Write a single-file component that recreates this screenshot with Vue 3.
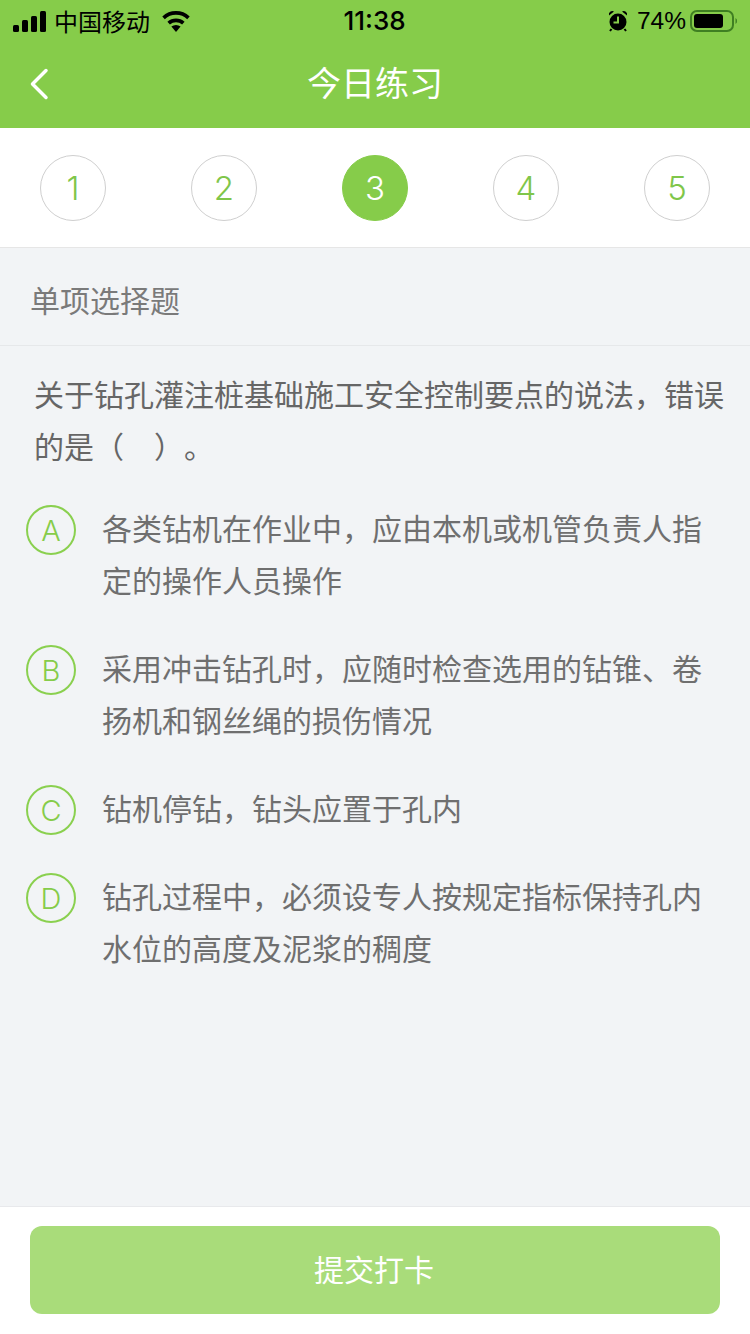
<script setup>
const steps = [1, 2, 3, 4, 5]
const current = 3
const comma = '\uFF0C'
const question = `关于钻孔灌注桩基础施工安全控制要点的说法${comma}错误的是\uFF08\u3000\uFF09\u3002`
const options = [
  { key: 'A', text: `各类钻机在作业中${comma}应由本机或机管负责人指定的操作人员操作` },
  { key: 'B', text: `采用冲击钻孔时${comma}应随时检查选用的钻锥、卷扬机和钢丝绳的损伤情况` },
  { key: 'C', text: `钻机停钻${comma}钻头应置于孔内` },
  { key: 'D', text: `钻孔过程中${comma}必须设专人按规定指标保持孔内水位的高度及泥浆的稠度` }
]
</script>

<template>
  <div class="page">
    <header class="top">
      <div class="status">
        <div class="status-left">
          <svg class="signal" width="34" height="21" viewBox="0 0 34 21">
            <rect x="0" y="14" width="6" height="7" rx="1.5" />
            <rect x="9" y="9" width="6" height="12" rx="1.5" />
            <rect x="18" y="5" width="6" height="16" rx="1.5" />
            <rect x="27" y="0" width="6" height="21" rx="1.5" />
          </svg>
          <span class="carrier">中国移动</span>
          <svg class="wifi" width="30" height="22" viewBox="0 0 30 22">
            <path d="M15 22l-4.6-5.4a7 7 0 0 1 9.2 0z" />
            <path d="M15 8.400a13 13 0 0 1 8.600 3.300l-2.500 2.900a9.300 9.300 0 0 0-12.200 0l-2.500-2.900A13 13 0 0 1 15 8.400z" />
            <path d="M15 1a20 20 0 0 1 13.700 5.400l-2.500 2.900a16.300 16.300 0 0 0-22.400 0L1.300 6.400A20 20 0 0 1 15 1z" />
          </svg>
        </div>
        <span class="time">11:38</span>
        <div class="status-right">
          <svg class="alarm" width="20" height="22" viewBox="0 0 20 22">
            <circle cx="10" cy="12" r="8.500" />
            <path d="M1 5.500a3.500 3.500 0 0 1 5-4zM19 5.500a3.500 3.500 0 0 0-5-4z" />
            <path d="M3.500 19l-1.500 2M16.500 19l1.500 2" stroke="#000" stroke-width="2" />
            <path d="M10 6.500V12.500H5.500" fill="none" stroke="#86cc4a" stroke-width="2" />
          </svg>
          <span class="percent">74%</span>
          <svg class="battery" width="48" height="22" viewBox="0 0 48 22">
            <rect x="1" y="1" width="42" height="20" rx="6" fill="none" stroke="#3f7f22" stroke-width="2" />
            <rect x="4" y="4" width="29" height="14" rx="3" fill="#000" />
            <path d="M45.500 8v6a3 3 0 0 0 1.500-3 3 3 0 0 0-1.500-3z" fill="#3f7f22" />
          </svg>
        </div>
      </div>
      <nav class="nav">
        <svg class="back" width="20" height="32" viewBox="0 0 20 32">
          <path d="M17 2.500 3.500 16 17 29.500" fill="none" stroke="#fff" stroke-width="3.500" stroke-linecap="round" stroke-linejoin="round" />
        </svg>
        <h1 class="title">今日练习</h1>
      </nav>
    </header>

    <div class="steps">
      <div v-for="n in steps" :key="n" class="step" :class="{ active: n === current }">{{ n }}</div>
    </div>

    <main class="main">
      <div class="kind">单项选择题</div>
      <p class="question">{{ question }}</p>
      <ul class="options">
        <li v-for="o in options" :key="o.key" class="option">
          <span class="badge">{{ o.key }}</span>
          <span class="option-text">{{ o.text }}</span>
        </li>
      </ul>
    </main>

    <footer class="bottom">
      <button class="submit" type="button">提交打卡</button>
    </footer>
  </div>
</template>

<style>
html, body { margin: 0; padding: 0; }
</style>

<style scoped>
.page {
  width: 750px;
  height: 1334px;
  display: flex;
  flex-direction: column;
  background: #f2f4f6;
  font-family: "Noto Sans CJK SC", "Liberation Sans", sans-serif;
  text-spacing-trim: space-all;
  overflow: hidden;
}
.top { background: #86cc4a; height: 128px; flex: none; }
.status {
  height: 40px;
  display: grid;
  grid-template-columns: 1fr auto 1fr;
  align-items: center;
  color: #000;
  padding: 0 12px 0 13px;
}
.status-left, .status-right { display: flex; align-items: center; }
.status-right { justify-content: flex-end; }
.signal { fill: #000; margin-right: 8px; }
.carrier { font-size: 24px; line-height: 40px; margin-left: -1px; }
.wifi { fill: #000; margin-left: 11px; }
.time { font-family: Inter, "Liberation Sans", sans-serif; font-size: 26px; font-weight: 500; line-height: 42px; margin-left: -2px; }
.alarm { fill: #000; margin-right: 9px; }
.percent { font-family: "Liberation Sans", sans-serif; font-size: 24.500px; line-height: 42px; margin-right: 4px; }
.nav {
  height: 88px;
  box-sizing: border-box;
  padding-bottom: 4px;
  display: flex;
  align-items: center;
  justify-content: center;
  position: relative;
}
.back { position: absolute; left: 29px; top: 28px; }
.title { margin: 0; font-size: 34px; font-weight: 400; color: #fff; line-height: 84px; }
.steps {
  flex: none;
  height: 119px;
  background: #fff;
  border-bottom: 1px solid #e6e6e6;
  display: flex;
  align-items: center;
  justify-content: space-between;
  padding: 0 40px;
}
.step {
  width: 66px;
  height: 66px;
  box-sizing: border-box;
  border: 1px solid #cfcfcf;
  border-radius: 50%;
  display: flex;
  align-items: center;
  justify-content: center;
  color: #7fc64a;
  font-family: Inter, "Liberation Sans", sans-serif;
  font-size: 33px;
  font-weight: 300;
}
.step.active { background: #86cc4a; border-color: #86cc4a; color: #fff; }
.main { flex: 1; min-height: 0; }
.kind {
  height: 98px;
  box-sizing: border-box;
  padding: 4px 0 0 30px;
  border-bottom: 1px solid #e6e8ea;
  display: flex;
  align-items: center;
  font-size: 30px;
  color: #7a7a7a;
}
.question {
  margin: 0;
  padding: 21px 25px 0 34px;
  font-size: 30px;
  line-height: 52px;
  color: #666;
}
.options { list-style: none; margin: 0; padding: 33px 0 0 26px; }
.option { display: flex; align-items: flex-start; margin-bottom: 36px; padding-right: 46px; }
.badge {
  flex: none;
  width: 50px;
  height: 50px;
  margin-top: 1px;
  box-sizing: border-box;
  border: 2px solid #8ad04f;
  border-radius: 50%;
  display: flex;
  align-items: center;
  justify-content: center;
  color: #86cc4a;
  font-family: Inter, "Liberation Sans", sans-serif;
  font-size: 29px;
  font-weight: 300;
}
.option-text {
  margin: -3px 0 3px 26px;
  font-size: 30px;
  line-height: 52px;
  color: #6f6f6f;
}
.bottom {
  flex: none;
  height: 128px;
  box-sizing: border-box;
  background: #fff;
  border-top: 1px solid #e8e9ec;
  padding: 19px 30px 20px;
}
.submit {
  display: block;
  width: 100%;
  height: 88px;
  padding: 0 2px 4px 0;
  border: 0;
  border-radius: 12px;
  background: #a9dc7a;
  color: #fff;
  font-family: inherit;
  font-size: 30px;
}
</style>
